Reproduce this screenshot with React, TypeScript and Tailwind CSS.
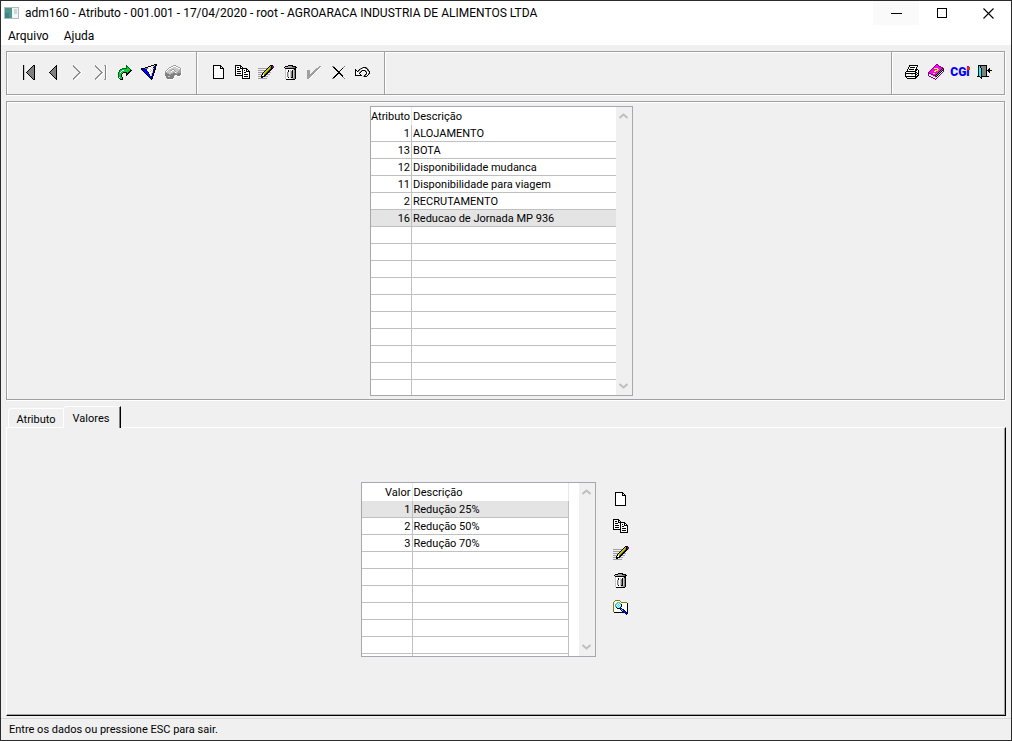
import React, { useState } from "react";

const palette: Record<string, string> = {
  K: "#000000",
  W: "#ffffff",
  G: "#808080",
  A: "#a0a0a0",
  L: "#c8c8c8",
  Y: "#c8c800",
  O: "#808000",
  P: "#800080",
  M: "#ff00ff",
  B: "#0000ff",
  N: "#000080",
  C: "#00ffff",
  R: "#ff0000",
  E: "#00d040",
  D: "#006010",
  F: "#ffff00",
};

function PixelIcon({ rows }: { rows: string[] }) {
  const width = Math.max(...rows.map((r) => r.length));
  const cells: React.ReactNode[] = [];
  rows.forEach((row, y) => {
    let x = 0;
    while (x < row.length) {
      let end = x + 1;
      while (end < row.length && row[end] === row[x]) end++;
      if (palette[row[x]]) {
        cells.push(<rect key={`${x}-${y}`} x={x} y={y} width={end - x} height={1} fill={palette[row[x]]} />);
      }
      x = end;
    }
  });
  return (
    <svg width={width} height={rows.length} shapeRendering="crispEdges" aria-hidden="true">
      {cells}
    </svg>
  );
}

const icons = {
  first: [
    "KL........KK",
    "KL.......KGK",
    "KL......KGGK",
    "KL.....KGGGK",
    "KL....KGGGGK",
    "KL...KGGGGGK",
    "KL..KGGGGGGK",
    "KL.KGGGGGGGK",
    "KL..KGGGGGGK",
    "KL...KGGGGGK",
    "KL....KGGGGK",
    "KL.....KGGGK",
    "KL......KGGK",
    "KL.......KGK",
    "KL........KK",
  ],
  previous: [
    ".......K",
    "......KK",
    ".....KGK",
    "....KGGK",
    "...KGGGK",
    "..KGGGGK",
    ".KGGGGGK",
    "KGGGGGGK",
    ".KGGGGGK",
    "..KGGGGK",
    "...KGGGK",
    "....KGGK",
    ".....KGK",
    "......KK",
    ".......K",
  ],
  next: [
    "AW.......",
    "GAW......",
    ".GAW.....",
    "..GAW....",
    "...GAW...",
    "....GAW..",
    ".....GAW.",
    "......GAW",
    ".....GAWW",
    "....GAWW.",
    "...GAWW..",
    "..GAWW...",
    ".GAWW....",
    "GAWW.....",
    "AWW......",
  ],
  last: [
    "AW.......AAW",
    "GAW.......GW",
    ".GAW......GW",
    "..GAW.....GW",
    "...GAW....GW",
    "....GAW...GW",
    ".....GAW..GW",
    "......GAW.GW",
    ".....GAWW.GW",
    "....GAWW..GW",
    "...GAWW...GW",
    "..GAWW....GW",
    ".GAWW.....GW",
    "GAWW......GW",
    "AWW......AAW",
  ],
  go: [
    "........D.....",
    "........DD....",
    "........DED...",
    "....DDDDDEED..",
    "..DDEEEEEEEED.",
    ".DEEWWEEEEEEKK",
    ".DEWEEEEEEEKK.",
    "DEWEEKKKKEKK..",
    "DEEEK...KKK...",
    "DEEK....KK....",
    "DEEK....K.....",
    "DEEK..........",
    "DWEEK.........",
    ".DEEK.........",
    "..KKK.........",
  ],
  filter: [
    ".............KKK",
    "..........KKKLKK",
    ".......KKKWWLNK.",
    "....KKKWWWLWNNK.",
    "KKKKGGGLWWWLLNK.",
    "KNBBBNWWWLWWNNK.",
    ".KBBBBWWWWLWNK..",
    "..KBBBBWWLWLNK..",
    "...KBBBNWWWLNK..",
    "....KBBBWWLNK...",
    ".....KBBNWLNK...",
    "......KBBWLNK...",
    ".......KBBNK....",
    "........KBNK....",
    ".........KNK....",
    "..........K.....",
  ],
  search: [
    "........AAA......",
    "......AAWWWAA....",
    "....AAWWLLLWWAA..",
    "...AWWLLLLLLLWWA.",
    "..AWLLLAALLLLLLAW",
    ".AWLLAAWWALLLLAAW",
    "AWLLLLWLLLALLAAAW",
    "AALLLLLLAAWLAAAAW",
    "GGAALLAAGGGAAGGGW",
    "GGGGAAGGGGGGGGGGW",
    "GGGGGGGGGAWWGGGW.",
    ".GGLLGGGGW..WWW..",
    ".GGGGGGGGW.......",
    "..GGGGGGW........",
    "...WWWWW.........",
  ],
  blank: [
    "KKKKKKKK...",
    "KWWWWWWKK..",
    "KWWWWWWKWK.",
    "KWWWWWWKKKK",
    "KWWWWWWWWWK",
    "KWWWWWWWWWK",
    "KWWWWWWWWWK",
    "KWWWWWWWWWK",
    "KWWWWWWWWWK",
    "KWWWWWWWWWK",
    "KWWWWWWWWWK",
    "KWWWWWWWWWK",
    "KWWWWWWWWWK",
    "KKKKKKKKKKK",
  ],
  copy: [
    "KKKKKK.........",
    "KWWWWKK........",
    "KWKKWKWK.......",
    "KWWWWKKKKKKK...",
    "KWKKKWWKWWWKK..",
    "KWWWWWWKWKWKWK.",
    "KWKKKKWKWWWKKKK",
    "KWWWWWWKWKKWWWK",
    "KWKKKKWKWWWWWWK",
    "KWWWWWWKWKKKKWK",
    "KKKKKKKKWWWWWWK",
    ".......KWKKKKWK",
    ".......KWWWWWWK",
    ".......KKKKKKKK",
  ],
  edit: [
    "............KKK.",
    "...........KYKPP",
    "..........KYOKPP",
    "AAAAAAAAAKYYOKK.",
    "........KYYOKK..",
    "AAAAAAAKYYOKK...",
    "......KYYOKK....",
    "AAAAAKYYOKKAA...",
    "....KYYOKK......",
    "AAAAKWOKKAAA....",
    "...KWWKK........",
    "AAAKKKKAAA......",
    "...KK...........",
    "AAAAAAAAA.......",
  ],
  trash: [
    "....KKKKK....",
    ".KKKAAAAKKKK.",
    "KLLAAAAAAGGKK",
    ".KKKKKKKKKKK.",
    ".LWWWWWWWLKK.",
    ".LWWKWLWKLGK.",
    ".LWWKWLGKLGK.",
    ".LWGLWLGKLGK.",
    ".LWGLWLGKLGK.",
    ".LWGLWLGKLGK.",
    ".LWGLWLGKLGK.",
    ".LWGLWLGKLGK.",
    ".LWWKWLKKLGK.",
    ".LWWWWWLLGGK.",
    "..KKKKKKKKK..",
  ],
  confirm: [
    "............AA",
    "...........AAW",
    ".........AAAW.",
    "........AAAW..",
    "AAA....AAAW...",
    "AAA...AAAW....",
    "AAA..AAAW.....",
    "AAA.AAAW......",
    "AAAAAAW.......",
    "AAAAAW........",
    "AAAAW.........",
    "AAAW..........",
    "AAW...........",
  ],
  cancel: [
    "GG..........G",
    ".KK........G.",
    "..KK......KW.",
    "...KK....KW..",
    "....KK..KW...",
    ".....KKKW....",
    "......KK.....",
    ".....KKKK....",
    "....KK..KK...",
    "...KKW...KK..",
    "..KKW.....KW.",
    ".KKW.......GW",
    "GG..........G",
  ],
  undo: [
    ".......GKKKG...",
    ".....GKGWWGKG..",
    "K...KGWWWWWWKG.",
    "KK.KGWGKKKGWGK.",
    "KWKGWGKW..KGWGK",
    "KWWWGKW....KWWK",
    "KWWWKW.....KWGK",
    "KWWWWK....KGWK.",
    "KKKKKKK..KGWK..",
    "........GKKK...",
  ],
  print: [
    "....KKKKKKKKK.",
    "....KWWWWWWWK.",
    "...KWKKKKKWK..",
    "...KWWWWWWWK..",
    "..KWKKKKKWKKK.",
    "..KWWWWWWWKKWK",
    ".KKKKKKKKKKWWK",
    "KWWWWWWWWWKKWK",
    "KKKKKKKKKKKWKK",
    "KWWWWWYYWWKKWK",
    "KWWWWWWWWWKWKK",
    "KKKKKKKKKKKKK.",
    ".KWWWWWWWWKK..",
    "..KKKKKKKKK...",
  ],
  help: [
    "........PP......",
    ".......PMMP.....",
    "......PMMMMPP...",
    ".....PMMMMMMMPP.",
    "....PMFFFFMMMMKP",
    "...PMMMMMFFMMKGK",
    "..PMMMMFFFMMKGKP",
    ".PMMMMFFMMMKGKWP",
    "PMMMMMMMMMKGKWP.",
    "PPPMMFFMMKGKWP..",
    "PWLPPMMMKGKWP...",
    "PWWLLPPKGKWP....",
    ".PPWWLLPKWP.....",
    "...PPWWLWP......",
    ".....PPWP.......",
    ".......P........",
  ],
  exit: [
    ".KKKKKKKKK.....",
    ".KCKGGGGGK.....",
    ".KCKGGGGGK.....",
    ".KCCKGGGGK..K..",
    ".KCCKGGGGK.KK..",
    ".KCCKGGGGKKKKKK",
    ".KCCKGGGGK.KK..",
    ".KCCKGGGGK..K..",
    ".KCCKGGGGK.....",
    ".KCCKGGGGK.....",
    ".KCCKGGGGK.....",
    "KKKCKKKKKKKK...",
    "...KK..........",
    "....K..........",
  ],
  browse: [
    "..OOOOO........",
    ".OWWWWWO.......",
    "OWWWAAAWOOOOOO.",
    "OWWACWCAWWWWWWK",
    "OWACWCWCKWWWWWK",
    "OWGWCWCWKWWWWWK",
    "OWGCWCWCKWWWWWK",
    "OWWKCWCKWWWWWWK",
    "OWWWKKKBKWWWWWK",
    "OWWWWWWKCBKWWWK",
    "OWWWWWWWKCBKWWK",
    "OWWWWWWWWKBBKWK",
    ".KKKKKKKKKKBBKK",
    "............BBN",
    ".............N.",
  ],
};

type IconName = keyof typeof icons;

const navigation: [IconName, string][] = [
  ["first", "Primeiro"],
  ["previous", "Anterior"],
  ["next", "Próximo"],
  ["last", "Último"],
  ["go", "Ir para"],
  ["filter", "Filtrar"],
  ["search", "Pesquisar"],
];

const editing: [IconName, string][] = [
  ["blank", "Novo"],
  ["copy", "Copiar"],
  ["edit", "Editar"],
  ["trash", "Excluir"],
  ["confirm", "Confirmar"],
  ["cancel", "Cancelar"],
  ["undo", "Desfazer"],
];

const valueActions: [IconName, string][] = [
  ["blank", "Novo valor"],
  ["copy", "Copiar valor"],
  ["edit", "Editar valor"],
  ["trash", "Excluir valor"],
  ["browse", "Consultar valor"],
];

const attributes: [string, string][] = [
  ["1", "ALOJAMENTO"],
  ["13", "BOTA"],
  ["12", "Disponibilidade mudanca"],
  ["11", "Disponibilidade para viagem"],
  ["2", "RECRUTAMENTO"],
  ["16", "Reducao de Jornada MP 936"],
];

const values: [string, string][] = [
  ["1", "Redução 25%"],
  ["2", "Redução 50%"],
  ["3", "Redução 70%"],
];

function ToolButton({ icon, label }: { icon: IconName; label: string }) {
  return (
    <button type="button" aria-label={label} className="flex h-6 w-6 items-center justify-center">
      <PixelIcon rows={icons[icon]} />
    </button>
  );
}

function Divider() {
  return <div className="w-0.5 border-l border-[#a0a0a0] bg-white" />;
}

function ScrollBar() {
  return (
    <div className="flex w-4 shrink-0 flex-col justify-between bg-[#f0f0f0] pr-px">
      <button type="button" aria-label="Rolar para cima" className="flex h-[18px] items-center justify-center">
        <svg width="9" height="6" fill="none" stroke="#bfbfbf" strokeWidth="2" aria-hidden="true">
          <path d="M0.5 5L4.5 1.5L8.5 5" />
        </svg>
      </button>
      <button type="button" aria-label="Rolar para baixo" className="flex h-[18px] items-center justify-center">
        <svg width="9" height="6" fill="none" stroke="#bfbfbf" strokeWidth="2" aria-hidden="true">
          <path d="M0.5 1L4.5 4.5L8.5 1" />
        </svg>
      </button>
    </div>
  );
}

interface DataGridProps {
  label: string;
  keyTitle: string;
  rows: [string, string][];
  rowCount: number;
  selected: number;
  onSelect: (index: number) => void;
  keyClass: string;
  textClass: string;
  edgeClass: string;
}

function DataGrid(props: DataGridProps) {
  const filled = Array.from({ length: props.rowCount }, (_, i) => props.rows[i] ?? ["", ""]);
  return (
    <table aria-label={props.label} className="table-fixed border-separate border-spacing-0 leading-[14px]">
      <thead>
        <tr className="h-[18px]">
          <th scope="col" className={`border-r border-[#e8e8e8] p-0 pt-0.5 pr-px text-right font-normal ${props.keyClass}`}>
            {props.keyTitle}
          </th>
          <th scope="col" className={`border-[#e8e8e8] p-0 pt-0.5 pl-px text-left font-normal ${props.textClass} ${props.edgeClass}`}>
            Descrição
          </th>
        </tr>
      </thead>
      <tbody>
        {filled.map(([key, text], i) => (
          <tr
            key={i}
            onClick={() => key && props.onSelect(i)}
            className={i === props.selected ? "h-[17px] bg-[#e4e4e4]" : "h-[17px] bg-white"}
          >
            <td className="border-r border-b border-[#c0c0c0] p-0 pt-0.5 pr-px text-right">{key}</td>
            <td className={`border-b border-[#c0c0c0] p-0 pt-0.5 pl-px whitespace-nowrap ${props.edgeClass}`}>{text}</td>
          </tr>
        ))}
      </tbody>
    </table>
  );
}

export default function App() {
  const [attribute, setAttribute] = useState(5);
  const [value, setValue] = useState(0);

  return (
    <div className="flex min-h-screen flex-col border border-[#2b2b2b] bg-[#f0f0f0] font-[Roboto,'Liberation_Sans',sans-serif] text-[11px] text-black">
      <header className="bg-white text-[12px]">
        <div className="flex h-6 items-center">
          <svg width="15" height="12" className="ml-[3px]" shapeRendering="crispEdges" aria-hidden="true">
            <rect width="15" height="12" fill="#b4bcc0" />
            <rect x="1" y="1" width="13" height="10" fill="#f4f6f6" />
            <rect x="1" y="1" width="7" height="10" fill="#4f9a86" />
            <rect x="1" y="6" width="4" height="5" fill="#3f7f98" />
            <rect x="10" y="2" width="3" height="5" fill="#c8d8dc" />
          </svg>
          <h1 className="ml-[6px] flex-1 whitespace-nowrap">
            adm160 - Atributo - 001.001 - 17/04/2020 - root - AGROARACA INDUSTRIA DE ALIMENTOS LTDA
          </h1>
          <div className="flex h-6">
            <button type="button" aria-label="Minimizar" className="flex w-[46px] items-center justify-center bg-[#fafafa]">
              <svg width="11" height="11" shapeRendering="crispEdges" aria-hidden="true">
                <rect y="5" width="11" height="1" />
              </svg>
            </button>
            <button type="button" aria-label="Maximizar" className="flex w-[46px] items-center justify-center">
              <svg width="10" height="10" fill="none" stroke="#000" aria-hidden="true">
                <rect x="0.5" y="0.5" width="9" height="9" />
              </svg>
            </button>
            <button type="button" aria-label="Fechar" className="flex w-[46px] items-center justify-center">
              <svg width="11" height="11" stroke="#000" strokeWidth="1.1" aria-hidden="true">
                <path d="M0.5 0.5L10.5 10.5M10.5 0.5L0.5 10.5" />
              </svg>
            </button>
          </div>
        </div>
        <nav className="flex h-5 items-center gap-[15px] pt-0.5 pl-[7px]">
          <button type="button">Arquivo</button>
          <button type="button">Ajuda</button>
        </nav>
      </header>

      <main className="flex flex-1 flex-col px-[5px] pt-[6px] pb-0.5">
        <div className="mr-px flex h-11 border border-[#a0a0a0] shadow-[1px_1px_0_#fff,inset_1px_1px_0_#fff]">
          <div className="flex items-center pr-[11px] pb-0.5 pl-[10px]">
            {navigation.map(([icon, label]) => (
              <ToolButton key={label} icon={icon} label={label} />
            ))}
          </div>
          <Divider />
          <div className="flex items-center pr-[10px] pb-0.5 pl-2">
            {editing.map(([icon, label]) => (
              <ToolButton key={label} icon={icon} label={label} />
            ))}
          </div>
          <Divider />
          <div className="flex-1" />
          <Divider />
          <div className="flex items-center pr-2 pb-0.5 pl-[7px]">
            <ToolButton icon="print" label="Imprimir" />
            <ToolButton icon="help" label="Conteúdo da ajuda" />
            <button
              type="button"
              className="relative flex h-6 w-6 items-center justify-center text-[12px] font-black text-[#0000ff]"
            >
              CGi
              <span className="absolute top-[7px] right-0.5 h-[3px] w-[3px] bg-[#ff2000]" />
            </button>
            <ToolButton icon="exit" label="Sair" />
          </div>
        </div>

        <section
          aria-label="Atributos"
          className="mt-[6px] mr-px flex justify-center border border-[#a0a0a0] pt-1 pr-2 pb-[3px] shadow-[1px_1px_0_#fff,inset_1px_1px_0_#fff]"
        >
          <div className="flex h-[290px] overflow-hidden border border-[#a4a7ae] bg-white">
            <DataGrid
              label="Atributos"
              keyTitle="Atributo"
              rows={attributes}
              rowCount={16}
              selected={attribute}
              onSelect={setAttribute}
              keyClass="w-[41px]"
              textClass="w-[204px]"
              edgeClass=""
            />
            <ScrollBar />
          </div>
        </section>

        <div role="tablist" className="mt-[6px] flex items-end pl-0.5">
          <button
            type="button"
            role="tab"
            aria-selected="false"
            className="h-[19px] w-[55px] rounded-tl-sm border-t border-l border-white pt-[3px] leading-[14px]"
          >
            Atributo
          </button>
          <button
            type="button"
            role="tab"
            aria-selected="true"
            className="relative -mb-px h-[22px] w-[58px] rounded-tl-sm border-t border-r border-l border-t-white border-r-black border-l-white bg-[#f0f0f0] pt-0.5 pr-0.5 leading-[14px] shadow-[inset_-1px_0_0_#808080]"
          >
            Valores
          </button>
        </div>
        <section
          role="tabpanel"
          aria-label="Valores"
          className="flex flex-1 items-start justify-center border border-t-white border-r-black border-b-black border-l-white pt-[54px] pr-[19px] shadow-[inset_-1px_-1px_0_#a0a0a0]"
        >
          <div className="flex h-[175px] overflow-hidden border border-[#a4a7ae] bg-white">
            <DataGrid
              label="Valores"
              keyTitle="Valor"
              rows={values}
              rowCount={10}
              selected={value}
              onSelect={setValue}
              keyClass="w-[51px]"
              textClass="w-[156px]"
              edgeClass="border-r"
            />
            <div className="w-[10px]" />
            <ScrollBar />
          </div>
          <div className="flex flex-col gap-[3px] pt-[5px] pl-[13px]">
            {valueActions.map(([icon, label]) => (
              <ToolButton key={label} icon={icon} label={label} />
            ))}
          </div>
        </section>
      </main>

      <footer className="h-[22px] border-t border-[#d7d7d7] pt-px pl-2 leading-5">
        Entre os dados ou pressione ESC para sair.
      </footer>
    </div>
  );
}
